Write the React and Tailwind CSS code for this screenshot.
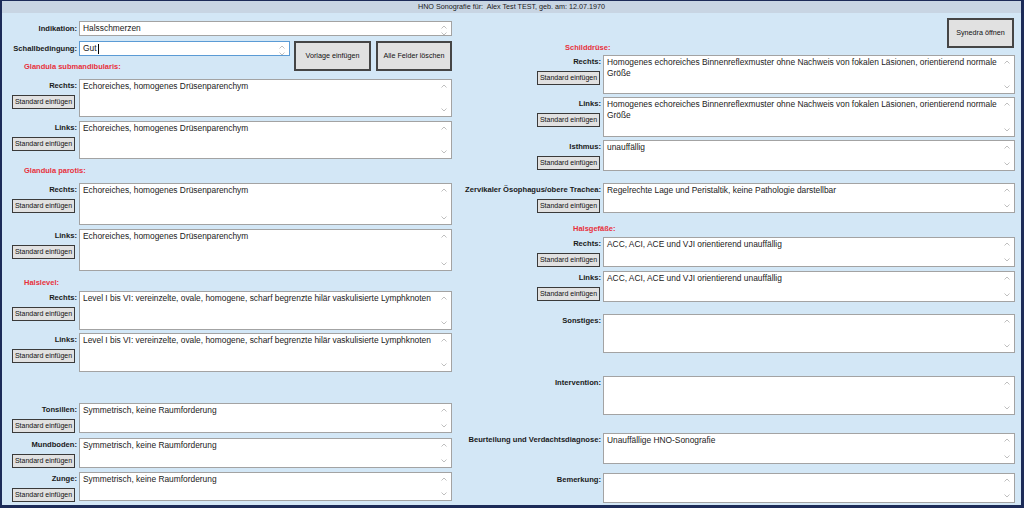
import React from "react";

function ChevUp() {
  return (
    <svg width="6" height="4" viewBox="0 0 6 4" className="block">
      <path d="M0.5 3.5 L3 1 L5.5 3.5" fill="none" stroke="#b8b8b8" strokeWidth="0.9" />
    </svg>
  );
}
function ChevDown() {
  return (
    <svg width="6" height="4" viewBox="0 0 6 4" className="block">
      <path d="M0.5 0.5 L3 3 L5.5 0.5" fill="none" stroke="#b8b8b8" strokeWidth="0.9" />
    </svg>
  );
}

function Area({ text, cls }) {
  return (
    <div className={`relative shrink-0 bg-white border border-[#a3a3a3] pl-[3px] pt-[1px] pr-[12px] text-[8.4px] leading-[11px] text-[#222] ${cls}`}>
      <div>{text}</div>
      <div className="absolute right-[4px] top-[4px]"><ChevUp /></div>
      <div className="absolute right-[4px] bottom-[4px]"><ChevDown /></div>
    </div>
  );
}

function StdBtn({ cls }) {
  return (
    <button className={`mt-[4px] w-[63px] h-[14px] bg-[#e1e1e1] border border-[#3a3a3a] text-[7px] leading-[12px] text-[#111] whitespace-nowrap flex items-center justify-center ${cls}`}>
      Standard einfügen
    </button>
  );
}

function Label({ children }) {
  return (
    <div className="pt-[2px] leading-[10px] text-[7.6px] font-bold text-[#1a1a1a] whitespace-nowrap">{children}</div>
  );
}

function LField({ label, text, cls, btn = true }) {
  return (
    <div className={`flex shrink-0 ${cls}`}>
      <div className="w-[75px] flex flex-col items-end">
        <Label>{label}</Label>
        {btn && <StdBtn cls="mr-[2px]" />}
      </div>
      <Area text={text} cls="ml-[2px] w-[373px] h-full" />
    </div>
  );
}

function RField({ label, text, cls, btn = true }) {
  return (
    <div className={`flex shrink-0 ${cls}`}>
      <div className="w-[149px] flex flex-col items-end">
        <Label>{label}</Label>
        {btn && <StdBtn cls="mr-[1px]" />}
      </div>
      <Area text={text} cls="ml-[2px] w-[412px] h-full" />
    </div>
  );
}

function Heading({ children, cls }) {
  return (
    <div className={`shrink-0 text-[7.5px] leading-[9px] h-[9px] font-bold text-[#e8303c] whitespace-nowrap ${cls}`}>{children}</div>
  );
}

function BigBtn({ children, cls }) {
  return (
    <button className={`h-[30px] bg-[#e1e1e1] border-2 border-[#454545] text-[7.2px] text-[#111] whitespace-nowrap flex items-center justify-center ${cls}`}>
      {children}
    </button>
  );
}

function Spin() {
  return (
    <div className="absolute right-[4px] top-[3px] flex flex-col gap-[3px]">
      <ChevUp />
      <ChevDown />
    </div>
  );
}

export default function App() {
  const drusen = "Echoreiches, homogenes Drüsenparenchym";
  const level = "Level I bis VI: vereinzelte, ovale, homogene, scharf begrenzte hilär vaskulisierte Lymphknoten";
  const sym = "Symmetrisch, keine Raumforderung";
  const schild = (
    <>
      <span className="whitespace-nowrap">Homogenes echoreiches Binnenreflexmuster ohne Nachweis von fokalen Läsionen, orientierend normale</span>
      <br />
      Größe
    </>
  );
  const acc = "ACC, ACI, ACE und VJI orientierend unauffällig";
  return (
    <div className="w-[1024px] h-[508px] bg-[#1c2b58] pt-[1px] pl-[2px] pr-[3px] pb-[3px] flex flex-col overflow-hidden font-['Liberation_Sans',Arial,sans-serif]">
      <div className="h-[12px] shrink-0 bg-[#c8d5e3] flex items-center justify-center text-[7.2px] text-[#1a1a1a] whitespace-pre">
        HNO Sonografie für:  Alex Test TEST, geb. am: 12.07.1970
      </div>
      <div className="flex-1 bg-[#d3e7f6] flex">
        {/* Left column */}
        <div className="w-[450px] shrink-0 flex flex-col">
          <div className="flex h-[15px] mt-[8px] shrink-0">
            <div className="w-[75px] flex justify-end items-center">
              <span className="text-[7.6px] font-bold text-[#1a1a1a] leading-[10px]">Indikation:</span>
            </div>
            <div className="relative ml-[2px] w-[373px] h-[15px] bg-white border border-[#a3a3a3] pl-[3px] text-[8.4px] leading-[13px] text-[#222]">
              Halsschmerzen
              <Spin />
            </div>
          </div>
          <div className="flex h-[30px] mt-[5px] shrink-0">
            <div className="flex flex-col">
              <div className="flex h-[15px]">
                <div className="w-[75px] flex justify-end items-center">
                  <span className="text-[7.6px] font-bold text-[#1a1a1a] leading-[10px]">Schallbedingung:</span>
                </div>
                <div className="relative ml-[2px] w-[211px] h-[15px] bg-white border border-[#5b9bd5] pl-[3px] text-[8.4px] leading-[13px] text-[#222] flex items-center">
                  <span>Gut</span>
                  <span className="w-px h-[10px] bg-black ml-[1px]" />
                  <Spin />
                </div>
              </div>
              <Heading cls="mt-[6px] pl-[22px]">Glandula submandibularis:</Heading>
            </div>
            <BigBtn cls="ml-[4px] w-[77px]">Vorlage einfügen</BigBtn>
            <BigBtn cls="ml-[5px] w-[76px]">Alle Felder löschen</BigBtn>
          </div>
          <LField label="Rechts:" text={drusen} cls="mt-[8px] h-[38px]" />
          <LField label="Links:" text={drusen} cls="mt-[4px] h-[38px]" />
          <Heading cls="mt-[7px] pl-[22px]">Glandula parotis:</Heading>
          <LField label="Rechts:" text={drusen} cls="mt-[8px] h-[42px]" />
          <LField label="Links:" text={drusen} cls="mt-[4px] h-[42px]" />
          <Heading cls="mt-[7px] pl-[22px]">Halslevel:</Heading>
          <LField label="Rechts:" text={level} cls="mt-[4px] h-[39px]" />
          <LField label="Links:" text={level} cls="mt-[3px] h-[39px]" />
          <LField label="Tonsillen:" text={sym} cls="mt-[31px] h-[30px]" />
          <LField label="Mundboden:" text={sym} cls="mt-[5px] h-[30px]" />
          <LField label="Zunge:" text={sym} cls="mt-[4px] h-[29px]" />
        </div>
        {/* Right column */}
        <div className="flex-1 flex flex-col">
          <div className="flex justify-between items-start h-[39px] shrink-0">
            <Heading cls="mt-[30px] pl-[113px]">Schilddrüse:</Heading>
            <BigBtn cls="mt-[5px] mr-[7px] w-[67px]">Synedra öffnen</BigBtn>
          </div>
          <RField label="Rechts:" text={schild} cls="mt-[3px] h-[39px]" />
          <RField label="Links:" text={schild} cls="mt-[3px] h-[40px]" />
          <RField label="Isthmus:" text="unauffällig" cls="mt-[3px] h-[31px]" />
          <RField label="Zervikaler Ösophagus/obere Trachea:" text="Regelrechte Lage und Peristaltik, keine Pathologie darstellbar" cls="mt-[12px] h-[30px]" />
          <Heading cls="mt-[11px] pl-[121px]">Halsgefäße:</Heading>
          <RField label="Rechts:" text={acc} cls="mt-[4px] h-[30px]" />
          <RField label="Links:" text={acc} cls="mt-[4px] h-[31px]" />
          <RField label="Sonstiges:" text="" btn={false} cls="mt-[12px] h-[39px]" />
          <RField label="Intervention:" text="" btn={false} cls="mt-[23px] h-[39px]" />
          <RField label="Beurteilung und Verdachtsdiagnose:" text="Unauffällige HNO-Sonografie" btn={false} cls="mt-[18px] h-[31px]" />
          <RField label="Bemerkung:" text="" btn={false} cls="mt-[9px] h-[30px]" />
        </div>
      </div>
    </div>
  );
}
